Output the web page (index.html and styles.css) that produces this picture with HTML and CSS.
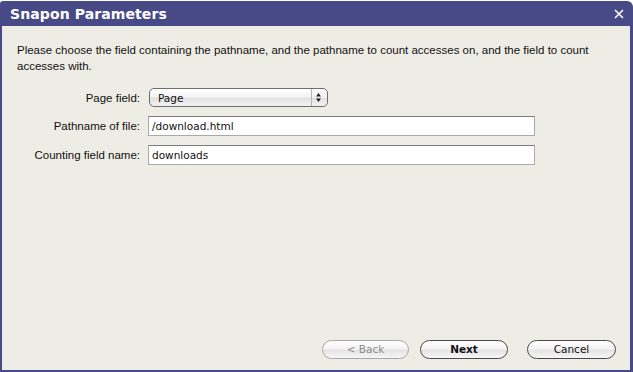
FILE: index.html
```html
<!DOCTYPE html>
<html>
<head>
<meta charset="utf-8">
<link rel="stylesheet" href="styles.css">
</head>
<body>
<div class="window">
  <div class="titlebar">
    <span class="title">Snapon Parameters</span>
    <svg class="close" width="10" height="10" viewBox="0 0 10 10"><path d="M1 1 L9 9 M9 1 L1 9" stroke="#fff" stroke-width="1.6" fill="none"/></svg>
  </div>
  <div class="content">
    <p class="intro">Please choose the field containing the pathname, and the pathname to count accesses on, and the field to count accesses with.</p>
    <div class="form">
      <span class="lbl">Page field:</span>
      <div class="select"><span class="sel-text">Page</span><span class="sel-arrows"><svg width="7" height="11" viewBox="0 0 7 11"><path d="M3.5 1 L6 4.5 L1 4.5 Z M3.5 10 L6 6.5 L1 6.5 Z" fill="#222"/></svg></span></div>
      <span class="lbl">Pathname of file:</span>
      <div class="input">/download.html</div>
      <span class="lbl">Counting field name:</span>
      <div class="input">downloads</div>
    </div>
    <div class="buttons">
      <button class="btn disabled">&lt; Back</button>
      <button class="btn default">Next</button>
      <button class="btn cancel">Cancel</button>
    </div>
  </div>
</div>
</body>
</html>
```
FILE: styles.css
```css
html, body {
  margin: 0;
  padding: 0;
  background: #ffffff;
}
.window {
  margin-top: 1px;
  width: 633px;
  height: 371px;
  box-sizing: border-box;
  background: #474a87;
  border-radius: 3px 6px 0 0;
  padding: 0 3px 2px 2px;
  display: flex;
  flex-direction: column;
}
.titlebar {
  height: 25px;
  flex: none;
  display: flex;
  align-items: center;
  justify-content: space-between;
  padding: 0 6px 0 8px;
}
.title {
  font-family: "DejaVu Sans", Verdana, sans-serif;
  font-weight: bold;
  font-size: 14px;
  color: #ffffff;
  letter-spacing: 0.1px;
  margin-top: 1px;
}
.close {
  margin-top: 1px;
}
.content {
  flex: 1;
  background: #eeede5;
  display: flex;
  flex-direction: column;
  padding: 16px 14px 11px 15px;
  font-family: "Liberation Sans", Arial, sans-serif;
  font-size: 11.5px;
  color: #111;
}
.intro {
  margin: 0;
  line-height: 16px;
}
.form {
  margin-top: 14px;
  display: grid;
  grid-template-columns: 123px 387px;
  column-gap: 8px;
  row-gap: 9px;
  align-items: center;
}
.lbl {
  text-align: right;
}
.select {
  width: 179px;
  height: 19px;
  margin-left: 1px;
  box-sizing: border-box;
  border: 1px solid #6e6e6e;
  border-radius: 5px;
  background: linear-gradient(#ffffff, #f3f3f3 45%, #e2e2e2 55%, #f2f2f2);
  display: flex;
  align-items: center;
  font-family: "DejaVu Sans", sans-serif;
  font-size: 10.5px;
  color: #111;
}
.sel-text {
  flex: 1;
  padding-left: 8px;
}
.sel-arrows {
  width: 12px;
  height: 100%;
  border-left: 1px solid #b5b5b5;
  display: flex;
  align-items: center;
  justify-content: center;
  margin-right: 3px;
}
.input {
  height: 20px;
  box-sizing: border-box;
  background: #ffffff;
  border: 1px solid #a9a9a9;
  border-top-color: #7c7c7c;
  font-family: "DejaVu Sans", sans-serif;
  font-size: 10.5px;
  line-height: 18px;
  padding-left: 3px;
  color: #111;
}
.buttons {
  margin-top: auto;
  display: flex;
  justify-content: flex-end;
  align-items: center;
}
.btn {
  height: 19px;
  border: 1px solid #4a4a4a;
  border-radius: 10px;
  background: linear-gradient(#ffffff, #f4f4f4 45%, #e4e4e4 55%, #f6f6f6);
  font-family: "DejaVu Sans", sans-serif;
  font-size: 10.5px;
  color: #111;
  padding: 0;
  line-height: 17px;
}
.btn.disabled {
  width: 87px;
  border-color: #a8a8a8;
  color: #8c8c8c;
}
.btn.default {
  width: 88px;
  margin-left: 11px;
  font-weight: bold;
}
.btn.cancel {
  width: 89px;
  margin-left: 19px;
}
```
